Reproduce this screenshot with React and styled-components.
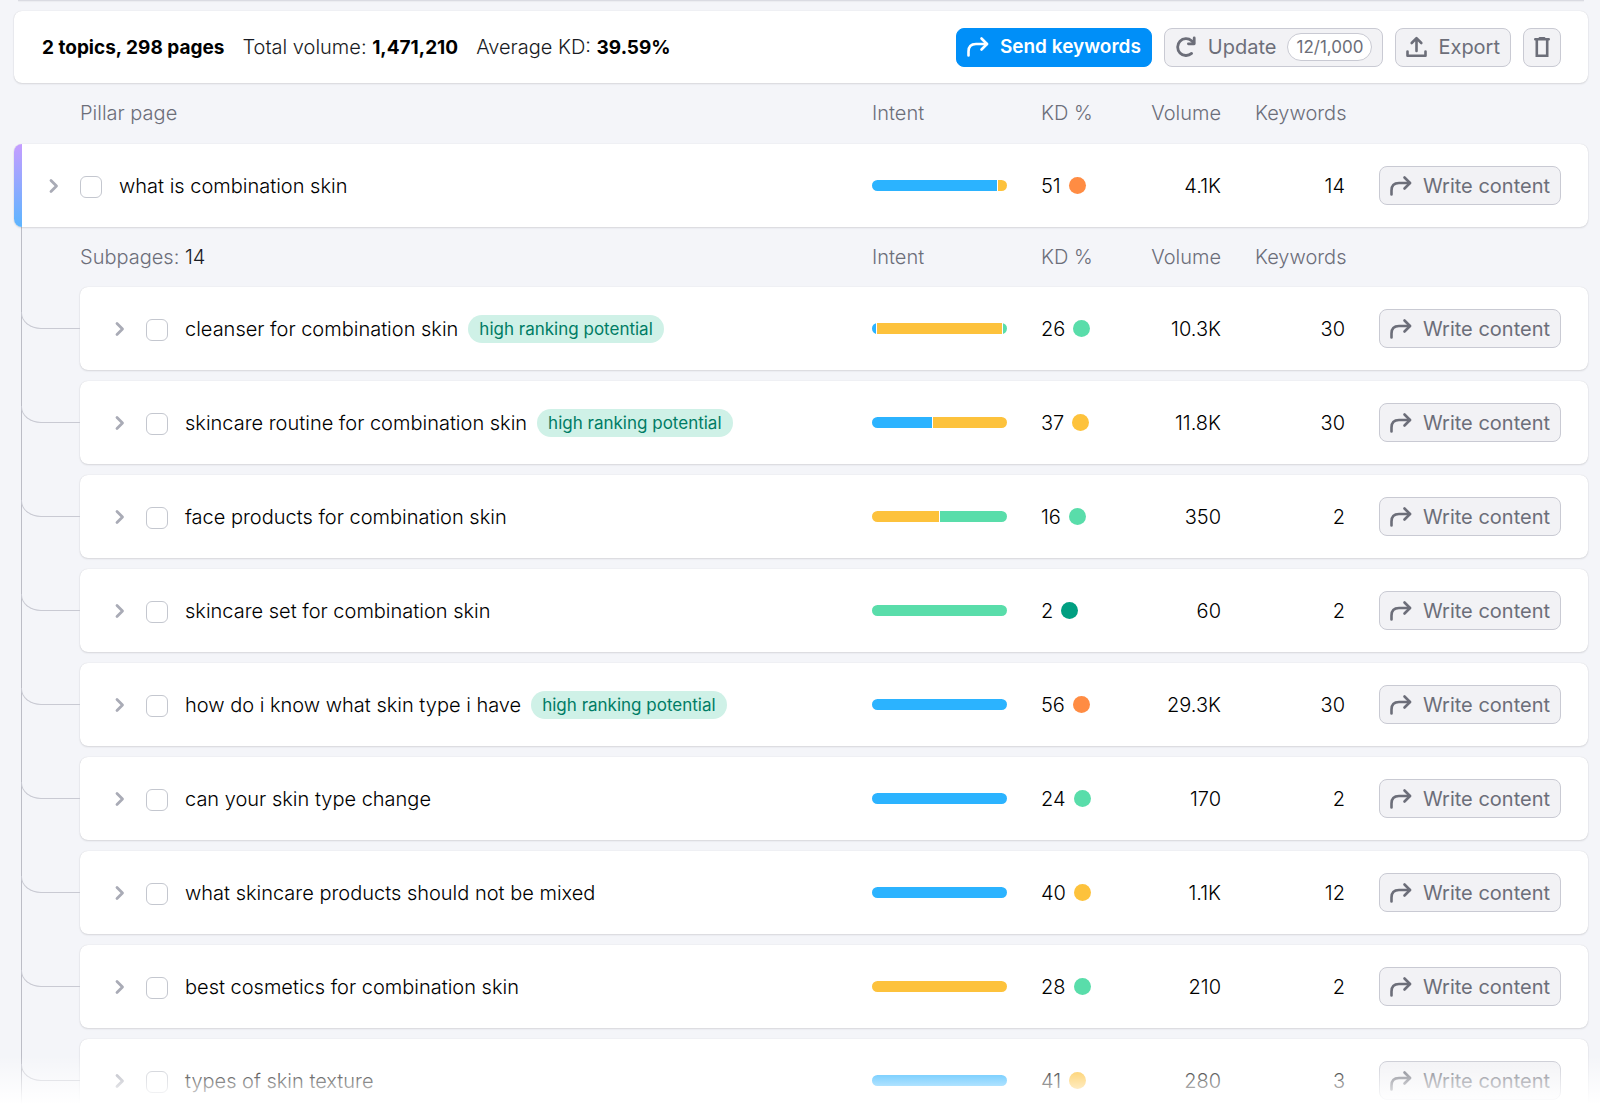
import React from 'react'
import styled, { createGlobalStyle } from 'styled-components'

const GlobalStyle = createGlobalStyle`
    * {
        box-sizing: border-box;
    }
    body {
        margin: 0;
        background: #f4f5f9;
        color: #191b23;
        font-family: Inter, 'Liberation Sans', sans-serif;
        font-size: 20px;
        font-weight: 300;
        line-height: 24px;
    }
`

const colors = {
    blue: '#2bb3ff',
    yellow: '#fdc23c',
    green: '#59ddaa',
    darkGreen: '#009f81',
    orange: '#ff8c43',
}

const Page = styled.main`
    position: relative;
    height: 100vh;
    overflow: hidden;
    padding: 0 12px 0 14px;
`
const PreviousCard = styled.div`
    height: 1px;
    margin: 0 4px 10px;
    background: #dadbe2;
    box-shadow: 0 1px 1px rgba(25, 27, 35, 0.04);
`
const Toolbar = styled.header`
    display: flex;
    align-items: center;
    justify-content: space-between;
    height: 72px;
    padding: 0 27px 0 28px;
    background: #fff;
    border-radius: 8px;
    box-shadow: 0 0 1px rgba(25, 27, 35, 0.16), 0 1px 2px rgba(25, 27, 35, 0.12);
`
const Summary = styled.div`
    display: flex;
    align-items: baseline;
    gap: 18px;
    color: #191b23;
    strong {
        font-size: 19px;
        font-weight: 700;
        color: #000;
    }
`
const Actions = styled.div`
    display: flex;
    gap: 12px;
`
const Button = styled.button`
    display: inline-flex;
    align-items: center;
    gap: 11px;
    height: 39px;
    padding: 0 10px;
    border: 1px solid ${({ $primary }) => ($primary ? '#008ff8' : '#c9cad3')};
    border-radius: 8px;
    background: ${({ $primary }) => ($primary ? '#008ff8' : '#f2f2f5')};
    color: ${({ $primary }) => ($primary ? '#fff' : '#6c6e79')};
    font-family: inherit;
    font-size: ${({ $primary }) => ($primary ? '19px' : '20px')};
    font-weight: ${({ $primary }) => ($primary ? 600 : 400)};
    line-height: 24px;
    white-space: nowrap;
    cursor: pointer;
    svg {
        flex: none;
    }
`
const Counter = styled.span`
    padding: 0 8px;
    border: 1px solid #c9cad3;
    border-radius: 14px;
    background: #fff;
    font-size: 17px;
    line-height: 26px;
`
const Table = styled.table`
    display: grid;
    gap: 1px;
    thead,
    tbody {
        display: grid;
        gap: 11px;
    }
`
const columns = `
    display: grid;
    grid-template-columns: minmax(0, 1fr) 135px 66px 80px 90px 182px;
    column-gap: 34px;
    align-items: center;
    padding-right: 27px;
`
const HeadRow = styled.tr`
    ${columns}
    height: ${({ $nested }) => ($nested ? '59px' : '60px')};
    padding-left: ${({ $nested }) => ($nested ? '58px' : '66px')};
    color: #6c6e79;
    span {
        color: #191b23;
    }
`
const HeadCell = styled.th`
    padding: 0;
    font-weight: 300;
    text-align: ${({ $right }) => ($right ? 'right' : 'left')};
`
const Row = styled.tr`
    ${columns}
    position: relative;
    height: 83px;
    padding-left: 35px;
    background: #fff;
    border-radius: 8px;
    box-shadow: 0 0 1px rgba(25, 27, 35, 0.16), 0 1px 2px rgba(25, 27, 35, 0.12);
`
const PillarRow = styled(Row)`
    overflow: hidden;
    &::before {
        content: '';
        position: absolute;
        inset: 0 auto 0 0;
        width: 8px;
        background: linear-gradient(#c59dff, #5cb5ff);
    }
`
const SubRow = styled(Row)`
    margin-left: 58px;
    &::before {
        content: '';
        position: absolute;
        right: 100%;
        bottom: 50%;
        width: 58px;
        height: 16px;
        border-bottom: 1px solid #c9cad3;
        border-left: 1px solid #c9cad3;
        border-bottom-left-radius: 20px 16px;
    }
`
const Subpages = styled.section`
    margin-left: 7px;
    border-left: 1px solid #bcbdc6;
    padding-bottom: 11px;
`
const Cell = styled.td`
    padding: 0;
    text-align: ${({ $right }) => ($right ? 'right' : 'left')};
    color: #000;
`
const NameCell = styled(Cell)`
    display: flex;
    align-items: center;
    white-space: nowrap;
`
const Expand = styled.button`
    display: flex;
    margin-right: 21px;
    padding: 0;
    border: 0;
    background: none;
    color: #a9abb6;
    cursor: pointer;
`
const Checkbox = styled.input`
    appearance: none;
    width: 22px;
    height: 22px;
    margin: 2px 17px 0 0;
    border: 1px solid #c4c7cf;
    border-radius: 6px;
    background: #fff;
    &:checked {
        background: #008ff8;
    }
`
const Tag = styled.span`
    margin-left: 10px;
    padding: 0 11px;
    border-radius: 14px;
    background: #cff1e7;
    color: #007c65;
    font-size: 17px;
    font-weight: 400;
    line-height: 28px;
`
const Bar = styled.div`
    display: flex;
    gap: 1px;
    height: 11px;
    border-radius: 6px;
    overflow: hidden;
`
const Segment = styled.span`
    background: ${({ $color }) => colors[$color]};
`
const Difficulty = styled.div`
    display: flex;
    align-items: center;
    gap: 8px;
`
const Dot = styled.span`
    width: 17px;
    height: 17px;
    border-radius: 50%;
    background: ${({ $color }) => colors[$color]};
`
const Fade = styled.div`
    position: absolute;
    inset: auto 0 0 0;
    height: 56px;
    background: linear-gradient(rgba(255, 255, 255, 0), #fff 86%);
    pointer-events: none;
`

const ForwardIcon = () => (
    <svg width="22" height="22" viewBox="0 0 22 22" fill="none" stroke="currentColor" strokeWidth="2.6" strokeLinecap="round" strokeLinejoin="round" aria-hidden="true">
        <path d="M1.5 19.5V15.5Q1.5 8 9 8H20" />
        <path d="M14.5 2.5L20 8L14.5 13.5" />
    </svg>
)
const RefreshIcon = () => (
    <svg width="22" height="22" viewBox="0 0 22 22" fill="none" stroke="currentColor" strokeWidth="2.8" strokeLinecap="round" aria-hidden="true">
        <path d="M16.6 17.4A8.4 8.4 0 1 1 16.6 4.8L18.8 7" />
        <path d="M19.2 2V7.8H13.4" strokeLinejoin="round" />
    </svg>
)
const ExportIcon = () => (
    <svg width="21" height="22" viewBox="0 0 21 22" fill="none" stroke="currentColor" strokeWidth="2.6" strokeLinecap="round" strokeLinejoin="round" aria-hidden="true">
        <path d="M1.5 15.5V19.7H19.5V15.5" />
        <path d="M10.5 15V2.5M5.7 7L10.5 2.2L15.3 7" />
    </svg>
)
const TrashIcon = () => (
    <svg width="16" height="22" viewBox="0 0 16 22" fill="none" stroke="currentColor" strokeWidth="2.6" strokeLinecap="round" aria-hidden="true">
        <path d="M1.3 3.3H14.7M5.8 2.2H10.2" />
        <path d="M2.8 4V19.7H13.2V4" />
    </svg>
)
const ChevronIcon = () => (
    <svg width="10" height="16" viewBox="0 0 10 16" fill="none" stroke="currentColor" strokeWidth="2.8" strokeLinecap="round" strokeLinejoin="round" aria-hidden="true">
        <path d="M2 2.5L7.5 8L2 13.5" />
    </svg>
)

const pillar = {
    name: 'what is combination skin',
    intent: [['blue', 93], ['yellow', 7]],
    kd: 51,
    level: 'orange',
    volume: '4.1K',
    keywords: 14,
}
const subpages = [
    {
        name: 'cleanser for combination skin',
        potential: true,
        intent: [['blue', 3], ['yellow', 94], ['green', 3]],
        kd: 26,
        level: 'green',
        volume: '10.3K',
        keywords: 30,
    },
    {
        name: 'skincare routine for combination skin',
        potential: true,
        intent: [['blue', 45], ['yellow', 55]],
        kd: 37,
        level: 'yellow',
        volume: '11.8K',
        keywords: 30,
    },
    {
        name: 'face products for combination skin',
        intent: [['yellow', 50], ['green', 50]],
        kd: 16,
        level: 'green',
        volume: '350',
        keywords: 2,
    },
    {
        name: 'skincare set for combination skin',
        intent: [['green', 100]],
        kd: 2,
        level: 'darkGreen',
        volume: '60',
        keywords: 2,
    },
    {
        name: 'how do i know what skin type i have',
        potential: true,
        intent: [['blue', 100]],
        kd: 56,
        level: 'orange',
        volume: '29.3K',
        keywords: 30,
    },
    {
        name: 'can your skin type change',
        intent: [['blue', 100]],
        kd: 24,
        level: 'green',
        volume: '170',
        keywords: 2,
    },
    {
        name: 'what skincare products should not be mixed',
        intent: [['blue', 100]],
        kd: 40,
        level: 'yellow',
        volume: '1.1K',
        keywords: 12,
    },
    {
        name: 'best cosmetics for combination skin',
        intent: [['yellow', 100]],
        kd: 28,
        level: 'green',
        volume: '210',
        keywords: 2,
    },
    {
        name: 'types of skin texture',
        intent: [['blue', 100]],
        kd: 41,
        level: 'yellow',
        volume: '280',
        keywords: 3,
    },
]

const TableHead = ({ nested, children }) => (
    <thead>
        <HeadRow $nested={nested}>
            <HeadCell>{children}</HeadCell>
            <HeadCell>Intent</HeadCell>
            <HeadCell>KD %</HeadCell>
            <HeadCell $right>Volume</HeadCell>
            <HeadCell $right>Keywords</HeadCell>
        </HeadRow>
    </thead>
)

const PageRow = ({ as: RowType, page }) => {
    const id = page.name.replace(/ /g, '-')
    return (
        <RowType>
            <NameCell>
                <Expand type="button" aria-label="Expand">
                    <ChevronIcon />
                </Expand>
                <Checkbox type="checkbox" id={id} />
                <label htmlFor={id}>{page.name}</label>
                {page.potential && <Tag>high ranking potential</Tag>}
            </NameCell>
            <Cell>
                <Bar>
                    {page.intent.map(([color, share]) => (
                        <Segment
                            key={color}
                            $color={color}
                            style={{ flex: share }}
                        />
                    ))}
                </Bar>
            </Cell>
            <Cell>
                <Difficulty>
                    {page.kd}
                    <Dot $color={page.level} />
                </Difficulty>
            </Cell>
            <Cell $right>{page.volume}</Cell>
            <Cell $right>{page.keywords}</Cell>
            <Cell $right>
                <Button type="button">
                    <ForwardIcon />
                    Write content
                </Button>
            </Cell>
        </RowType>
    )
}

const App = () => (
    <>
        <GlobalStyle />
        <Page>
            <PreviousCard />
            <Toolbar>
                <Summary>
                    <strong>2 topics, 298 pages</strong>
                    <span>
                        Total volume: <strong>1,471,210</strong>
                    </span>
                    <span>
                        Average KD: <strong>39.59%</strong>
                    </span>
                </Summary>
                <Actions>
                    <Button type="button" $primary>
                        <ForwardIcon />
                        Send keywords
                    </Button>
                    <Button type="button">
                        <RefreshIcon />
                        Update
                        <Counter>12/1,000</Counter>
                    </Button>
                    <Button type="button">
                        <ExportIcon />
                        Export
                    </Button>
                    <Button type="button" aria-label="Delete">
                        <TrashIcon />
                    </Button>
                </Actions>
            </Toolbar>
            <Table>
                <TableHead>Pillar page</TableHead>
                <tbody>
                    <PageRow as={PillarRow} page={pillar} />
                </tbody>
            </Table>
            <Subpages>
                <Table>
                    <TableHead nested>
                        Subpages: <span>14</span>
                    </TableHead>
                    <tbody>
                        {subpages.map(page => (
                            <PageRow key={page.name} as={SubRow} page={page} />
                        ))}
                    </tbody>
                </Table>
            </Subpages>
            <Fade />
        </Page>
    </>
)

export default App
